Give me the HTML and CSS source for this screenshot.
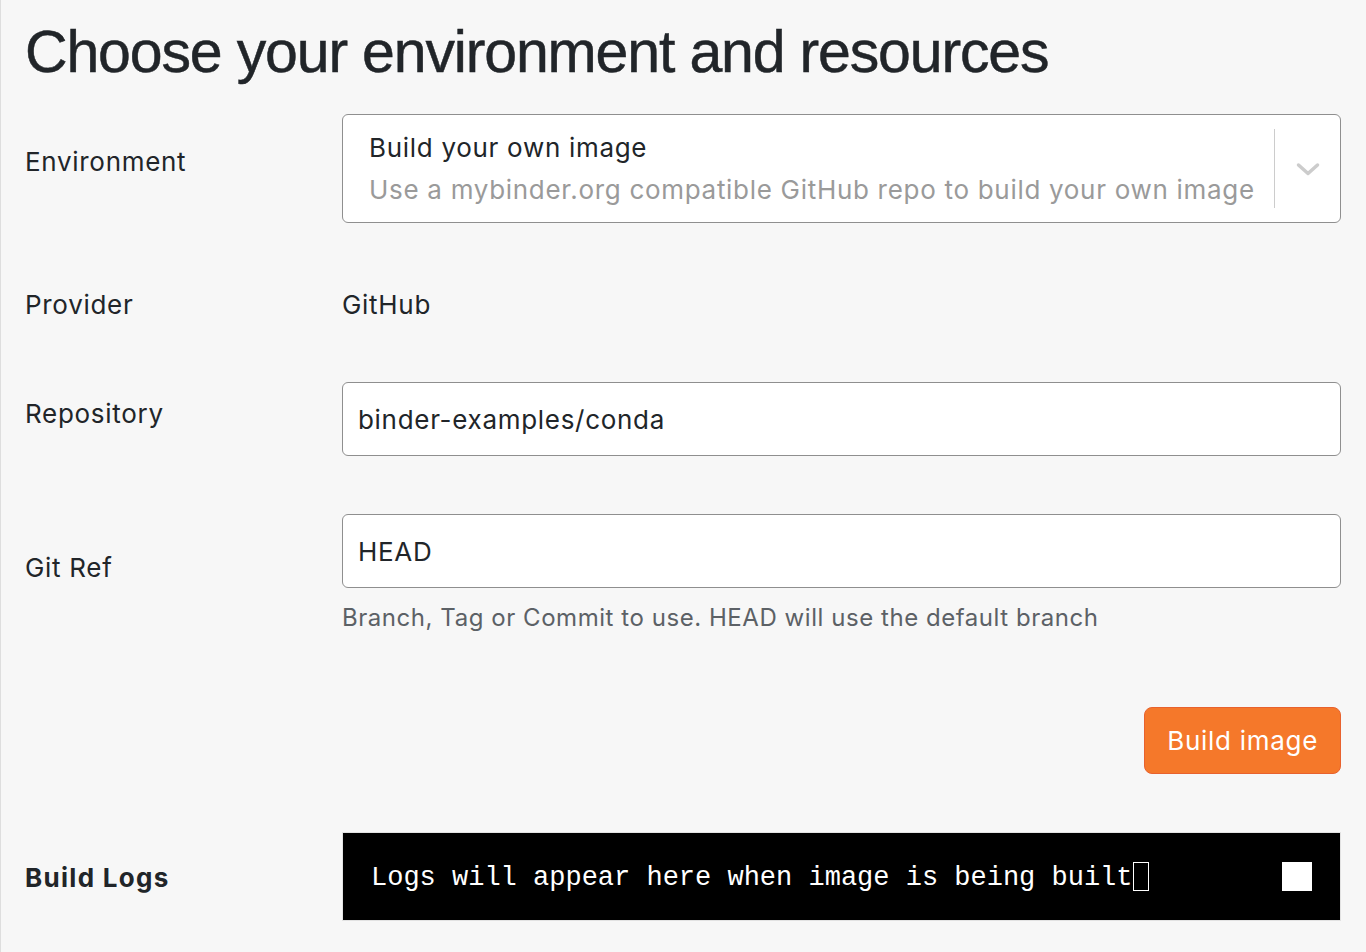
FILE: index.html
```html
<!DOCTYPE html>
<html lang="en">
<head>
<meta charset="utf-8">
<title>Choose your environment and resources</title>
<link rel="stylesheet" href="styles.css">
</head>
<body>
<div class="page">
  <h1 class="title">Choose your environment and resources</h1>
  <div class="form">
    <div class="row row-env">
      <div class="label label-env">Environment</div>
      <div class="select">
        <div class="select-value">
          <div class="select-title">Build your own image</div>
          <div class="select-sub">Use a mybinder.org compatible GitHub repo to build your own image</div>
        </div>
        <div class="select-sep"></div>
        <div class="select-arrow">
          <svg width="24" height="16" viewBox="0 0 24 16"><polyline points="2.5,3 12,11.5 21.5,3" fill="none" stroke="#cccccc" stroke-width="3.5" stroke-linecap="round" stroke-linejoin="round"/></svg>
        </div>
      </div>
    </div>

    <div class="row row-provider">
      <div class="label">Provider</div>
      <div class="static">GitHub</div>
    </div>

    <div class="row row-repo">
      <div class="label label-repo">Repository</div>
      <div class="input">binder-examples/conda</div>
    </div>

    <div class="row row-ref">
      <div class="label label-ref">Git Ref</div>
      <div class="field">
        <div class="input">HEAD</div>
        <div class="help">Branch, Tag or Commit to use. HEAD will use the default branch</div>
      </div>
    </div>

    <div class="row row-button">
      <div class="label"></div>
      <div class="actions">
        <button class="btn">Build image</button>
      </div>
    </div>

    <div class="row row-logs">
      <div class="label label-logs">Build Logs</div>
      <div class="terminal">
        <div class="term-line">Logs will appear here when image is being built<span class="cursor"></span></div>
        <div class="term-block"></div>
      </div>
    </div>
  </div>
</div>
</body>
</html>
```

FILE: styles.css
```css
html, body {
  margin: 0;
  padding: 0;
  background: #f7f7f7;
}

body {
  min-height: 952px;
  border-left: 1px solid #dedede;
  box-sizing: border-box;
  font-family: Inter, "Noto Sans", sans-serif;
  font-size: 26px;
  line-height: 39px;
  letter-spacing: 0.7px;
  color: #212529;
}

.page {
  padding: 16px 25px 0 24px;
}

.title {
  margin: 0 0 26px 0;
  font-family: "Liberation Sans", Arial, sans-serif;
  font-weight: 400;
  font-size: 59px;
  line-height: 72px;
  letter-spacing: -1.15px;
  -webkit-text-stroke: 0.5px #212529;
  color: #212529;
}

.form {
  display: flex;
  flex-direction: column;
}

.row {
  display: grid;
  grid-template-columns: 317px 1fr;
  align-items: start;
}

.row-provider { margin-top: 62px; }
.row-repo { margin-top: 58px; }
.row-ref { margin-top: 58px; }
.row-button { margin-top: 70px; }
.row-logs { margin-top: 58px; }

.label-env { padding-top: 28px; }
.label-repo { padding-top: 12px; }
.label-ref { padding-top: 34px; }
.label-logs {
  padding-top: 26px;
  font-weight: 700;
  letter-spacing: 1.3px;
}

/* select */
.select {
  display: flex;
  align-items: stretch;
  background: #fff;
  border: 1px solid #8f8f8f;
  border-radius: 6px;
}

.select-value {
  flex: 1;
  min-width: 0;
  padding: 12px 16px 11px 26px;
  overflow: hidden;
  white-space: nowrap;
}

.select-title {
  line-height: 42px;
  color: #212529;
}

.select-sub {
  line-height: 42px;
  color: #9a9a9a;
}

.select-sep {
  width: 1px;
  margin: 14px 0;
  background: #cccccc;
}

.select-arrow {
  width: 65px;
  display: flex;
  align-items: center;
  justify-content: center;
}

.select-arrow svg {
  display: block;
  margin-top: 2px;
}

/* inputs */
.input {
  background: #fff;
  border: 1px solid #8f8f8f;
  border-radius: 6px;
  padding: 17px 15px 16px 15px;
  line-height: 39px;
  color: #212529;
}

.help {
  margin-top: 10px;
  font-size: 24px;
  letter-spacing: 0.55px;
  color: #5c6166;
}

/* button */
.actions {
  display: flex;
  justify-content: flex-end;
}

.btn {
  font-family: Inter, "Noto Sans", sans-serif;
  font-size: 26px;
  line-height: 39px;
  letter-spacing: 0.7px;
  color: #fff;
  background: #f5782a;
  border: 1px solid #e8622e;
  border-radius: 8px;
  padding: 13px 22px;
  cursor: pointer;
}

/* terminal */
.terminal {
  display: flex;
  align-items: flex-start;
  justify-content: space-between;
  background: #000;
  border: 1px solid #e2e2e2;
  padding: 24px 28px 24px 28px;
}

.term-line {
  font-family: "Liberation Mono", "Courier New", monospace;
  font-size: 27px;
  line-height: 35px;
  padding-top: 4px;
  letter-spacing: 0;
  color: #fff;
  white-space: pre;
  display: flex;
  align-items: flex-start;
}

.cursor {
  display: inline-block;
  width: 14px;
  height: 27px;
  border: 1px solid #fff;
  margin-top: 1px;
}

.term-block {
  width: 30px;
  height: 29px;
  margin-top: 5px;
  background: #fff;
}
```
